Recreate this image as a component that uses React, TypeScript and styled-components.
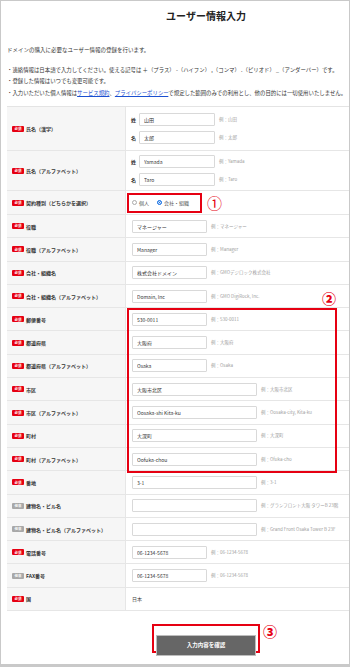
import { createGlobalStyle, styled } from "styled-components";

const GlobalStyle = createGlobalStyle`
  html, body {
    margin: 0;
    padding: 0;
    background: #fff;
  }
  body {
    font-family: "Noto Sans CJK JP", "Noto Sans", sans-serif;
    color: #333;
  }
  * {
    box-sizing: border-box;
  }
`;

interface Field {
  label: string;
  required?: boolean;
  value?: string;
  hint: string;
  wide?: boolean;
  text?: boolean;
}

const fields: Field[] = [
  { label: "役職", required: true, value: "マネージャー", hint: "例：マネージャー" },
  { label: "役職（アルファベット）", required: true, value: "Manager", hint: "例：Manager" },
  { label: "会社・組織名", required: true, value: "株式会社ドメイン", hint: "例：GMOデジロック株式会社" },
  { label: "会社・組織名（アルファベット）", required: true, value: "Domain, Inc", hint: "例：GMO DigiRock, Inc." },
  { label: "郵便番号", required: true, value: "530-0011", hint: "例：530-0011" },
  { label: "都道府県", required: true, value: "大阪府", hint: "例：大阪府" },
  { label: "都道府県（アルファベット）", required: true, value: "Osaka", hint: "例：Osaka" },
  { label: "市区", required: true, value: "大阪市北区", hint: "例：大阪市北区", wide: true },
  { label: "市区（アルファベット）", required: true, value: "Oosaka-shi Kita-ku", hint: "例：Oosaka-city, Kita-ku", wide: true },
  { label: "町村", required: true, value: "大深町", hint: "例：大深町", wide: true },
  { label: "町村（アルファベット）", required: true, value: "Oofuka-chou", hint: "例：Ofuka-cho", wide: true },
  { label: "番地", required: true, value: "3-1", hint: "例：3-1", wide: true },
  { label: "建物名・ビル名", value: "", hint: "例：グランフロント大阪 タワーB 23階", wide: true },
  { label: "建物名・ビル名（アルファベット）", value: "", hint: "例：Grand Front Osaka Tower B 23F", wide: true },
  { label: "電話番号", required: true, value: "06-1234-5678", hint: "例：06-1234-5678" },
  { label: "FAX番号", value: "06-1234-5678", hint: "例：06-1234-5678" },
  { label: "国", required: true, value: "日本", hint: "", text: true },
];

function Label({ text, required }: { text: string; required?: boolean }) {
  return (
    <LabelCell>
      <Badge $required={required}>{required ? "必須" : "任意"}</Badge>
      <LabelText>{text}</LabelText>
    </LabelCell>
  );
}

export default function App() {
  return (
    <>
      <GlobalStyle />
      <Frame>
        <Page>
          <Title>ユーザー情報入力</Title>
          <Intro>ドメインの購入に必要なユーザー情報の登録を行います。</Intro>
          <Notes>
            <li>
              ・連絡情報は日本語で入力してください。使える記号は ＋（プラス） -（ハイフン） ,（コンマ） .（ピリオド） _（アンダーバー）です。
            </li>
            <li>・登録した情報はいつでも変更可能です。</li>
            <li>
              ・入力いただいた個人情報は<Link>サービス規約</Link>、
              <Link>プライバシーポリシー</Link>で規定した範囲のみでの利用とし、他の目的には一切使用いたしません。
            </li>
          </Notes>

          <Table>
            <Row>
              <Label text="氏名（漢字）" required />
              <StackCell $loose>
                <NameLine>
                  <SubLabel>姓</SubLabel>
                  <TextInput readOnly value="山田" $width={76} />
                  <Hint>例：山田</Hint>
                </NameLine>
                <NameLine>
                  <SubLabel>名</SubLabel>
                  <TextInput readOnly value="太郎" $width={76} />
                  <Hint>例：太郎</Hint>
                </NameLine>
              </StackCell>
            </Row>
            <Row>
              <Label text="氏名（アルファベット）" required />
              <StackCell>
                <NameLine>
                  <SubLabel>姓</SubLabel>
                  <TextInput readOnly value="Yamada" $width={76} />
                  <Hint>例：Yamada</Hint>
                </NameLine>
                <NameLine>
                  <SubLabel>名</SubLabel>
                  <TextInput readOnly value="Taro" $width={76} />
                  <Hint>例：Taro</Hint>
                </NameLine>
              </StackCell>
            </Row>
            <Row>
              <Label text="契約種別（どちらかを選択）" required />
              <RadioCell>
                <RadioGroup>
                  <RadioItem>
                    <Radio />
                    個人
                  </RadioItem>
                  <RadioItem>
                    <Radio $checked />
                    会社・組織
                  </RadioItem>
                </RadioGroup>
                <Mark $bold={false}>①</Mark>
              </RadioCell>
            </Row>
            {fields.map((f) => (
              <Row key={f.label}>
                <Label text={f.label} required={f.required} />
                <FieldCell>
                  {f.text ? (
                    <PlainValue>{f.value}</PlainValue>
                  ) : (
                    <>
                      <TextInput readOnly value={f.value} $width={f.wide ? 125 : 75} />
                      <Hint>{f.hint}</Hint>
                    </>
                  )}
                  {f.label === "郵便番号" && (
                    <>
                      <AddressBox />
                      <FloatMark>②</FloatMark>
                    </>
                  )}
                </FieldCell>
              </Row>
            ))}
          </Table>

          <Actions>
            <ButtonBox>
              <SubmitButton type="button">入力内容を確認</SubmitButton>
            </ButtonBox>
            <Mark $bold>③</Mark>
          </Actions>
        </Page>
      </Frame>
    </>
  );
}

const Frame = styled.div`
  width: 350px;
  height: 667px;
  border: 1px solid #c9c9c9;
  border-bottom-width: 3px;
  overflow: hidden;
`;

const Page = styled.div`
  width: 398px;
  margin-left: 6px;
`;

const Title = styled.h1`
  margin: 8px 0 0;
  font-size: 10px;
  line-height: 14px;
  font-weight: 700;
  text-align: center;
  color: #222;
`;

const Intro = styled.p`
  margin: 23px 0 0;
  font-size: 5.5px;
  line-height: 8px;
`;

const Notes = styled.ul`
  margin: 12px 0 0;
  padding: 0;
  list-style: none;
  display: flex;
  flex-direction: column;
  gap: 2.5px;
  font-size: 5.4px;
  line-height: 8px;

  li:last-child {
    margin-top: 2px;
  }
`;

const Link = styled.a`
  color: #1a4fd0;
  text-decoration: underline;
`;

const Table = styled.div`
  margin-top: 9px;
  border-top: 1px solid #e4e4e4;
`;

const Row = styled.div`
  display: grid;
  grid-template-columns: 119px 1fr;
  border-bottom: 1px solid #e6e6e6;
`;

const LabelCell = styled.div`
  display: flex;
  align-items: center;
  gap: 2px;
  padding-left: 5px;
  background: #f6f6f6;
  border-right: 1px solid #e6e6e6;
`;

const Badge = styled.span<{ $required?: boolean }>`
  display: inline-flex;
  align-items: center;
  justify-content: center;
  width: 12px;
  height: 6px;
  border-radius: 1px;
  background: ${({ $required }) => ($required ? "#e60012" : "#a8a8a8")};
  color: #fff;
  font-size: 3.5px;
  font-weight: 700;
  line-height: 1;
`;

const LabelText = styled.span`
  font-size: 5px;
  line-height: 7px;
  font-weight: 700;
  color: #333;
`;

const StackCell = styled.div<{ $loose?: boolean }>`
  display: flex;
  flex-direction: column;
  gap: 5px;
  padding: ${({ $loose }) => ($loose ? "6px 5px 6px" : "4px 5px 4px")};
`;

const NameLine = styled.div`
  display: flex;
  align-items: center;
  height: 13px;
`;

const SubLabel = styled.span`
  width: 8px;
  font-size: 5px;
  line-height: 7px;
  font-weight: 700;
`;

const FieldCell = styled.div`
  position: relative;
  display: flex;
  align-items: center;
  height: 22.3px;
  padding-left: 6px;
`;

const TextInput = styled.input<{ $width: number }>`
  width: ${({ $width }) => $width}px;
  height: 13px;
  margin: 0;
  padding: 0 4px;
  border: 1px solid #d9d9d9;
  border-radius: 1px;
  background: #fff;
  font-family: "Noto Sans CJK JP", "Noto Sans", sans-serif;
  font-size: 5px;
  color: #333;
  outline: none;
`;

const Hint = styled.span`
  margin-left: 4px;
  font-size: 4.5px;
  line-height: 7px;
  color: #a0a0a0;
  white-space: nowrap;
`;

const PlainValue = styled.span`
  font-size: 5px;
  line-height: 7px;
  color: #444;
`;

const RadioCell = styled.div`
  display: flex;
  align-items: center;
  gap: 5px;
  height: 23px;
  padding-left: 1px;
`;

const RadioGroup = styled.div`
  display: flex;
  align-items: center;
  gap: 8px;
  width: 75px;
  height: 20px;
  padding-left: 3px;
  border: 2px solid #e60012;
`;

const RadioItem = styled.label`
  display: flex;
  align-items: center;
  gap: 2px;
  font-size: 5px;
  line-height: 7px;
  font-weight: 400;
  color: #555;
`;

const Radio = styled.span<{ $checked?: boolean }>`
  width: 5px;
  height: 5px;
  border-radius: 50%;
  border: ${({ $checked }) => ($checked ? "1.5px solid #1b74e4" : "0.8px solid #aaa")};
  background: ${({ $checked }) => ($checked ? "#1b74e4" : "#fff")};
  box-shadow: ${({ $checked }) => ($checked ? "inset 0 0 0 0.8px #fff" : "none")};
`;

const Mark = styled.span<{ $bold: boolean }>`
  color: #e60012;
  font-size: ${({ $bold }) => ($bold ? "14px" : "15px")};
  font-weight: ${({ $bold }) => ($bold ? 900 : 400)};
  line-height: 1;
`;

const AddressBox = styled.div`
  position: absolute;
  left: 1px;
  top: 0;
  width: 210px;
  height: 165px;
  border: 2px solid #e60012;
  pointer-events: none;
`;

const FloatMark = styled.span`
  position: absolute;
  left: 196px;
  top: -17px;
  color: #e60012;
  font-size: 14px;
  font-weight: 900;
  line-height: 1;
`;

const Actions = styled.div`
  display: flex;
  align-items: flex-start;
  justify-content: center;
  gap: 3px;
  margin-top: 13px;
  padding-left: 17px;
`;

const ButtonBox = styled.div`
  width: 108px;
  height: 29px;
  padding: 2px;
  border: 2px solid #e60012;
`;

const SubmitButton = styled.button`
  width: 100%;
  height: 100%;
  margin: 0;
  border: 1px solid #bdbdbd;
  background: #666;
  color: #fff;
  font-family: "Noto Sans CJK JP", "Noto Sans", sans-serif;
  font-size: 5.5px;
  font-weight: 700;
  cursor: pointer;
`;
